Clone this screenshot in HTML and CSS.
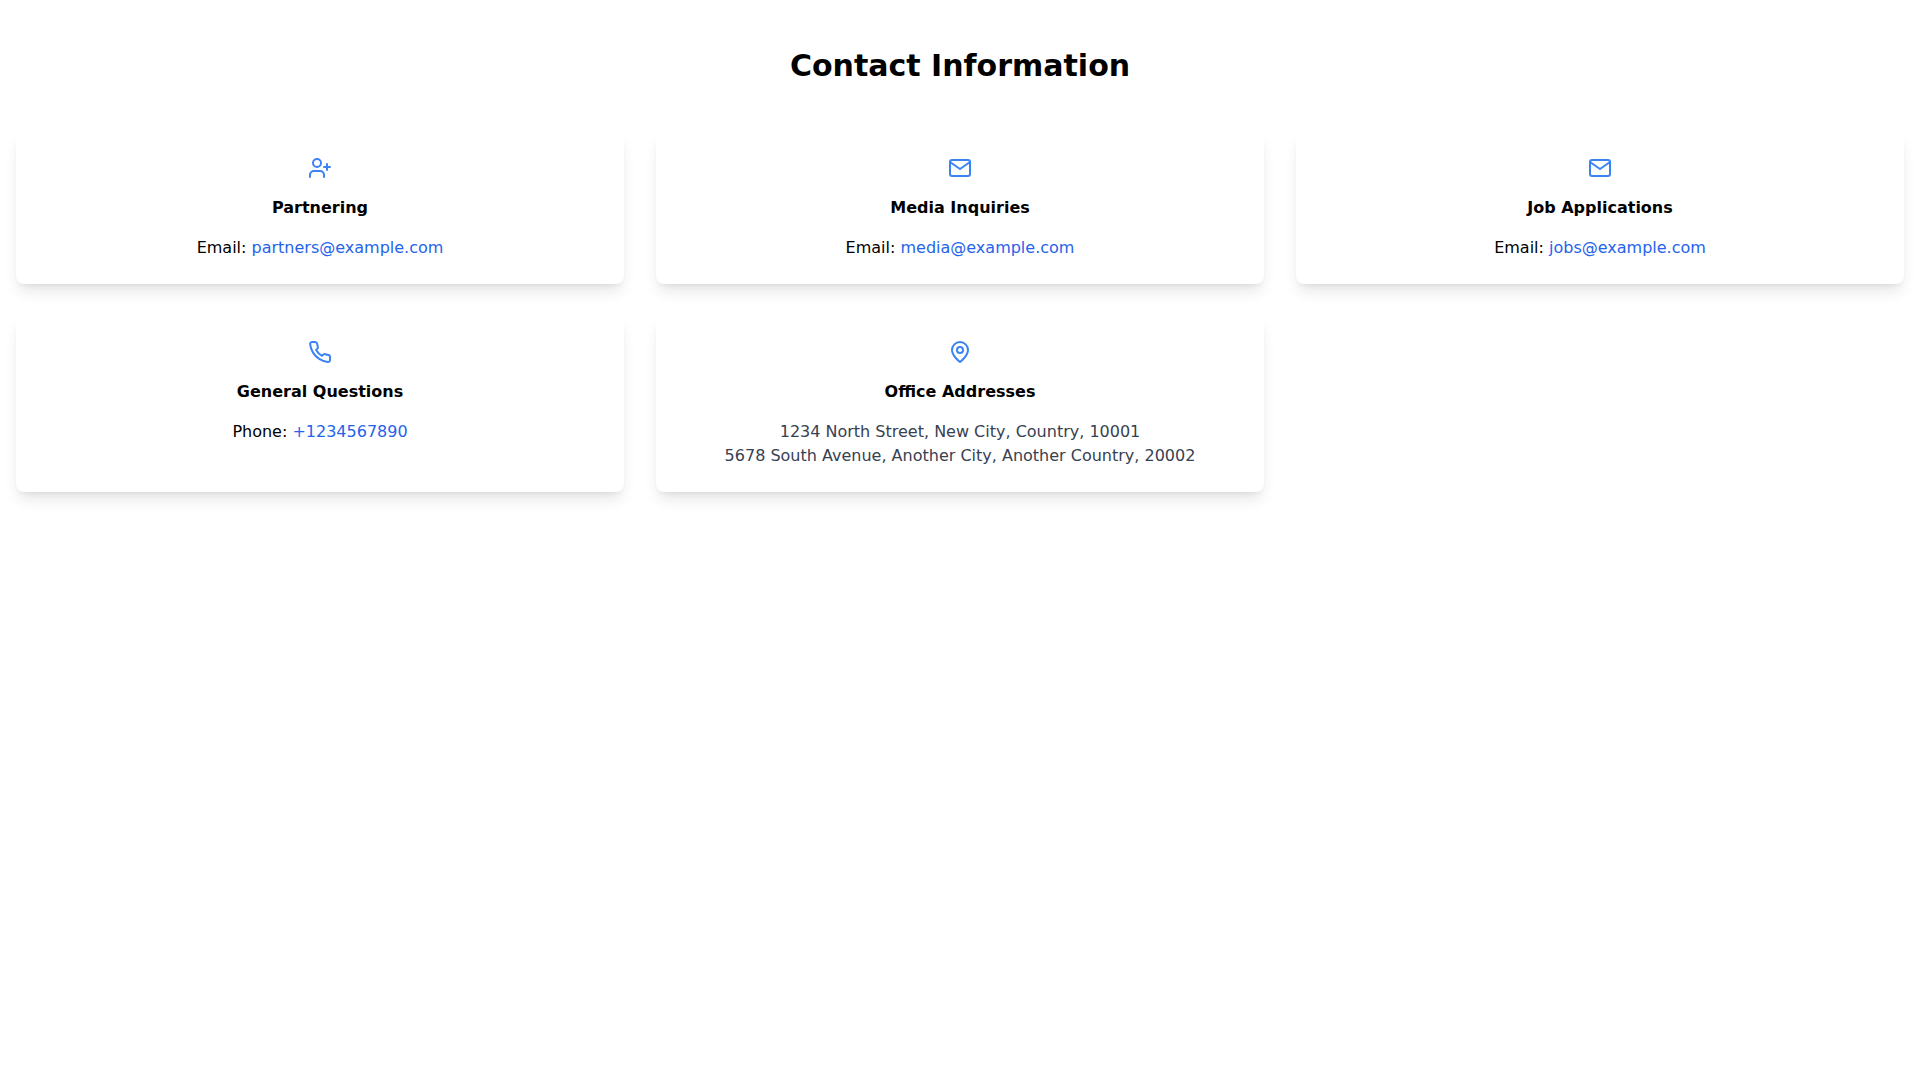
FILE: index.html
```html
<!DOCTYPE html>
<html lang="en">
<head>
<meta charset="utf-8">
<title>Contact Information</title>
<link rel="stylesheet" href="styles.css">
</head>
<body>
<main class="page">
  <h1 class="title">Contact Information</h1>
  <div class="grid">
    <section class="card">
      <svg class="icon" viewBox="0 0 24 24"><path d="M16 21v-2a4 4 0 0 0-4-4H6a4 4 0 0 0-4 4v2"/><circle cx="9" cy="7" r="4"/><line x1="19" y1="8" x2="19" y2="14"/><line x1="22" y1="11" x2="16" y2="11"/></svg>
      <h2 class="card-title">Partnering</h2>
      <p class="line">Email: <a class="link" href="#">partners@example.com</a></p>
    </section>
    <section class="card">
      <svg class="icon" viewBox="0 0 24 24"><path d="M4 4h16c1.1 0 2 .9 2 2v12c0 1.1-.9 2-2 2H4c-1.1 0-2-.9-2-2V6c0-1.1.9-2 2-2z"/><polyline points="22,6 12,13 2,6"/></svg>
      <h2 class="card-title">Media Inquiries</h2>
      <p class="line">Email: <a class="link" href="#">media@example.com</a></p>
    </section>
    <section class="card">
      <svg class="icon" viewBox="0 0 24 24"><path d="M4 4h16c1.1 0 2 .9 2 2v12c0 1.1-.9 2-2 2H4c-1.1 0-2-.9-2-2V6c0-1.1.9-2 2-2z"/><polyline points="22,6 12,13 2,6"/></svg>
      <h2 class="card-title">Job Applications</h2>
      <p class="line">Email: <a class="link" href="#">jobs@example.com</a></p>
    </section>
    <section class="card">
      <svg class="icon" viewBox="0 0 24 24"><path d="M22 16.92v3a2 2 0 0 1-2.18 2 19.79 19.79 0 0 1-8.63-3.07 19.5 19.5 0 0 1-6-6 19.79 19.79 0 0 1-3.07-8.67A2 2 0 0 1 4.11 2h3a2 2 0 0 1 2 1.72 12.84 12.84 0 0 0 .7 2.81 2 2 0 0 1-.45 2.11L8.09 9.91a16 16 0 0 0 6 6l1.27-1.27a2 2 0 0 1 2.11-.45 12.84 12.84 0 0 0 2.81.7A2 2 0 0 1 22 16.92z"/></svg>
      <h2 class="card-title">General Questions</h2>
      <p class="line">Phone: <a class="link" href="#">+1234567890</a></p>
    </section>
    <section class="card">
      <svg class="icon" viewBox="0 0 24 24"><path d="M20 10c0 6-8 12-8 12s-8-6-8-12a8 8 0 0 1 16 0z"/><circle cx="12" cy="10" r="3"/></svg>
      <h2 class="card-title">Office Addresses</h2>
      <p class="line muted">1234 North Street, New City, Country, 10001</p>
      <p class="line muted">5678 South Avenue, Another City, Another Country, 20002</p>
    </section>
  </div>
</main>
</body>
</html>
```
FILE: styles.css
```css
* { box-sizing: border-box; }
html, body { margin: 0; padding: 0; background: #fff; }
body {
  font-family: "DejaVu Sans", sans-serif;
  font-size: 16px;
  line-height: 24px;
  color: #000;
}
.page { padding: 48px 16px; }
.title {
  margin: 0 0 48px;
  font-size: 30px;
  line-height: 36px;
  font-weight: 700;
  text-align: center;
}
.grid {
  display: grid;
  grid-template-columns: repeat(3, 1fr);
  gap: 32px;
}
.card {
  padding: 24px;
  background: #fff;
  border-radius: 8px;
  text-align: center;
  box-shadow: 0 10px 15px -3px rgba(0,0,0,.1), 0 4px 6px -4px rgba(0,0,0,.1);
}
.icon {
  display: block;
  width: 24px;
  height: 24px;
  margin: 0 auto 16px;
  fill: none;
  stroke: #3b82f6;
  stroke-width: 2;
  stroke-linecap: round;
  stroke-linejoin: round;
}
.card-title {
  margin: 0 0 16px;
  font-size: 16px;
  line-height: 24px;
  font-weight: 700;
}
.line { margin: 0; }
.muted { color: #374151; }
.link { color: #2563eb; text-decoration: none; }
```
